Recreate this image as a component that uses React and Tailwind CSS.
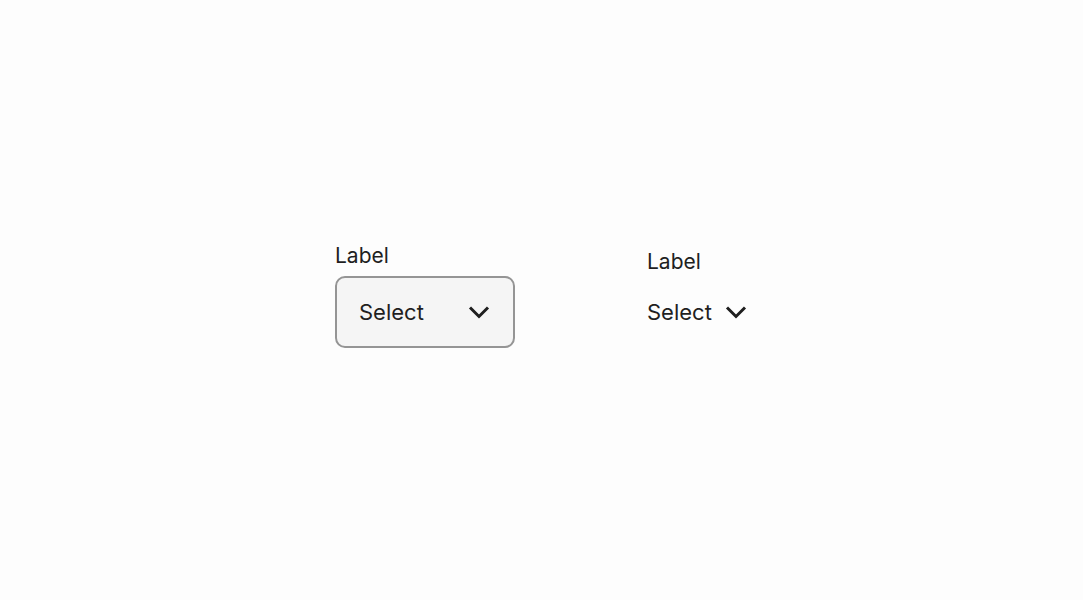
const Chevron = () => (
  <svg width="22" height="14" viewBox="0 0 22 14" fill="none" className="shrink-0">
    <path d="M2 2.5 L11 11.5 L20 2.5" stroke="#1f1f1f" strokeWidth="3" />
  </svg>
);

const App = () => {
  return (
    <div
      className="min-h-screen bg-[#fdfdfd] text-[#1f1f1f] pt-[242px] pl-[335px]"
      style={{ fontFamily: "Inter, 'Noto Sans', sans-serif" }}
    >
      <div className="flex items-end gap-[132px]">
        <div className="flex flex-col">
          <span className="text-[21px] leading-[28px]">Label</span>
          <button className="mt-[6px] w-[180px] h-[72px] rounded-[10px] border-2 border-[#959595] bg-[#f5f5f5] flex items-center justify-between pl-[22px] pr-[23px]">
            <span className="text-[22px] leading-[28px]">Select</span>
            <Chevron />
          </button>
        </div>
        <div className="flex flex-col">
          <span className="text-[21px] leading-[28px]">Label</span>
          <button className="mt-[0px] h-[72px] flex items-center gap-[13px]">
            <span className="text-[22px] leading-[28px]">Select</span>
            <Chevron />
          </button>
        </div>
      </div>
    </div>
  );
};

export default App;
